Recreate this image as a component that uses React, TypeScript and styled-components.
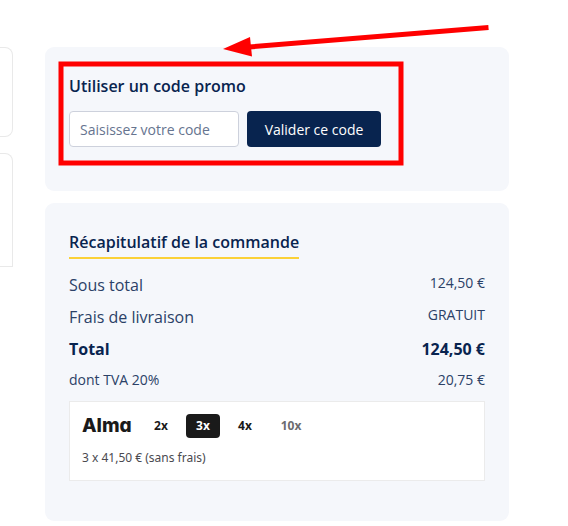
import React, { useState } from "react";
import styled, { createGlobalStyle } from "styled-components";

const NAVY = "#08244f";

const GlobalStyle = createGlobalStyle`
  *, *::before, *::after { box-sizing: border-box; }
  body {
    margin: 0;
    background: #fff;
    color: ${NAVY};
    font-family: "Open Sans", "Noto Sans", sans-serif;
    overflow-x: hidden;
  }
  h2, p, form, dl, dt, dd { margin: 0; padding: 0; }
  button, input { font-family: inherit; }
`;

const Page = styled.main`
  display: grid;
  grid-template-columns: 13px minmax(0, 1fr);
  column-gap: 32px;
  align-items: start;
  padding: 47px 59px 5px 0;
`;

const Steps = styled.div`
  display: flex;
  flex-direction: column;
  gap: 16px;
`;

const StepCard = styled.section<{ $open?: boolean }>`
  height: ${(p) => (p.$open ? 114 : 90)}px;
  border: 1px solid #e9e9e9;
  border-left: 0;
  border-radius: ${(p) => (p.$open ? "0 8px 0 0" : "0 8px 8px 0")};
`;

const Sidebar = styled.aside`
  display: flex;
  flex-direction: column;
  gap: 12px;
`;

const Panel = styled.section`
  position: relative;
  padding: 27px 24px 40px;
  border-radius: 9px;
  background: #f5f7fb;
`;

const PromoPanel = styled(Panel)`
  padding-bottom: 44px;
`;

const Title = styled.h2<{ $underlined?: boolean }>`
  width: fit-content;
  font: 600 16px/24px "Open Sans", "Noto Sans", sans-serif;
  white-space: nowrap;
  ${(p) => p.$underlined && "padding-bottom: 3px; border-bottom: 2px solid #fbd137;"}
`;

const PromoForm = styled.form`
  display: flex;
  gap: 8px;
  margin-top: 13px;
`;

const PromoInput = styled.input`
  width: 170px;
  height: 36px;
  padding: 0 10px;
  border: 1px solid #cdd1dc;
  border-radius: 4px;
  background: #fff;
  color: ${NAVY};
  font-size: 14px;
  &::placeholder { color: #66748f; opacity: 1; }
`;

const SubmitButton = styled.button`
  width: 134px;
  height: 36px;
  padding: 0;
  border: 0;
  border-radius: 4px;
  background: ${NAVY};
  color: #fff;
  font-size: 14px;
  white-space: nowrap;
`;

const Annotation = styled.svg`
  position: absolute;
  top: -27px;
  left: 0;
  width: 464px;
  height: 160px;
  overflow: visible;
  pointer-events: none;
`;

const Lines = styled.dl`
  margin-top: 10px;
`;

const Line = styled.div<{ $kind?: "total" | "tax" }>`
  display: flex;
  justify-content: space-between;
  height: ${(p) => (p.$kind === "tax" ? 28 : 32)}px;
  line-height: ${(p) => (p.$kind === "tax" ? 30 : 32)}px;
  color: ${(p) => (p.$kind === "total" ? NAVY : "#2b4167")};
  font-weight: ${(p) => (p.$kind === "total" ? 700 : 400)};
  font-size: ${(p) => (p.$kind === "tax" ? 14 : 16)}px;
  ${(p) => !p.$kind && "dd { font-size: 14px; line-height: 28px; }"}
`;

const Payment = styled.div`
  margin-top: 8px;
  height: 80px;
  padding: 12px;
  border: 1px solid #ebebeb;
  background: #fff;
  color: #1a1a1a;
`;

const Plans = styled.div`
  display: flex;
  align-items: center;
`;

const Logo = styled.span`
  width: 62px;
  font: 800 19px/24px Inter, sans-serif;
  font-feature-settings: "cv11";
`;

const Plan = styled.button<{ $active?: boolean; $muted?: boolean }>`
  width: 34px;
  height: 24px;
  margin-right: 8px;
  padding: 0;
  border: 0;
  border-radius: 4px;
  background: ${(p) => (p.$active ? "#1a1a1a" : "transparent")};
  color: ${(p) => (p.$active ? "#fff" : p.$muted ? "#6c6c70" : "#1a1a1a")};
  font: 700 12px/24px "Noto Sans", sans-serif;
  &:last-child { margin: 0 0 0 4px; }
`;

const Instalments = styled.p`
  margin-top: 12px;
  color: #4a4a50;
  font: 400 12px/16px "Noto Sans", sans-serif;
`;

const PLANS = ["2x", "3x", "4x", "10x"];

export default function App() {
  const [plan, setPlan] = useState("3x");
  const [code, setCode] = useState("");

  return (
    <>
      <GlobalStyle />
      <Page>
        <Steps>
          <StepCard />
          <StepCard $open />
        </Steps>
        <Sidebar>
          <PromoPanel>
            <Title>Utiliser un code promo</Title>
            <PromoForm onSubmit={(e) => e.preventDefault()}>
              <PromoInput
                type="text"
                aria-label="Code promo"
                placeholder="Saisissez votre code"
                value={code}
                onChange={(e) => setCode(e.target.value)}
              />
              <SubmitButton type="submit">Valider ce code</SubmitButton>
            </PromoForm>
            <Annotation viewBox="0 0 464 160" aria-hidden="true">
              <rect x="16" y="44" width="340" height="99" fill="none" stroke="#f00" strokeWidth="5" />
              <path d="M443.5 7.500 L204 27" stroke="#f00" strokeWidth="5" />
              <path d="M178 29 L205 17 L207 36.500 Z" fill="#f00" />
            </Annotation>
          </PromoPanel>
          <Panel>
            <Title $underlined>Récapitulatif de la commande</Title>
            <Lines>
              <Line><dt>Sous total</dt><dd>124,50 €</dd></Line>
              <Line><dt>Frais de livraison</dt><dd>GRATUIT</dd></Line>
              <Line $kind="total"><dt>Total</dt><dd>124,50 €</dd></Line>
              <Line $kind="tax"><dt>dont TVA 20%</dt><dd>20,75 €</dd></Line>
            </Lines>
            <Payment>
              <Plans>
                <Logo>Alma</Logo>
                {PLANS.map((name) => (
                  <Plan
                    key={name}
                    type="button"
                    aria-pressed={plan === name}
                    $active={plan === name}
                    $muted={name === "10x"}
                    onClick={() => setPlan(name)}
                  >
                    {name}
                  </Plan>
                ))}
              </Plans>
              <Instalments>3 x 41,50 € (sans frais)</Instalments>
            </Payment>
          </Panel>
        </Sidebar>
      </Page>
    </>
  );
}
